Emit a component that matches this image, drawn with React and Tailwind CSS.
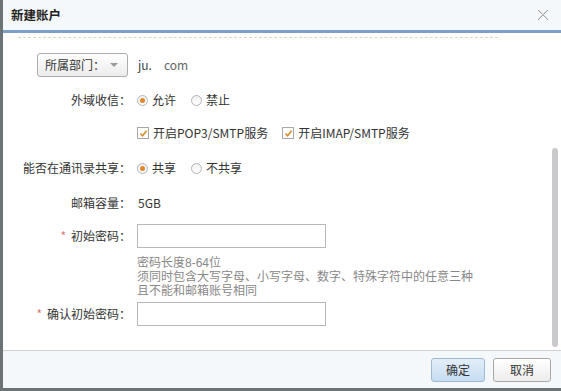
const font = { fontFamily: '"Noto Sans CJK SC", "Noto Sans", sans-serif' }

function Radio({ checked, label }) {
  return (
    <label className="flex items-center gap-[4px] mr-[15px]">
      <span className="w-[11px] h-[11px] rounded-full border border-[#b4b4b4] bg-gradient-to-b from-[#f0f0f0] to-white flex items-center justify-center">
        {checked && <span className="w-[5px] h-[5px] rounded-full bg-[#e2872c]" />}
      </span>
      <span>{label}</span>
    </label>
  )
}

function Check({ label }) {
  return (
    <label className="flex items-center gap-[4px] mr-[14px]">
      <span className="w-[12px] h-[12px] border border-[#a7a7a7] bg-white flex items-center justify-center">
        <svg width="9" height="9" viewBox="0 0 9 9">
          <path d="M1.5 4.5 L3.6 6.8 L7.6 1.8" fill="none" stroke="#d98a2a" strokeWidth="1.6" />
        </svg>
      </span>
      <span>{label}</span>
    </label>
  )
}

function Row({ label, star, className = '', children }) {
  return (
    <div className={`flex items-center ${className}`}>
      <div className="w-[128px] text-right shrink-0">
        {star && <span className="text-[#d77a7a] mr-[5px]">*</span>}
        {label}
      </div>
      <div className="ml-[6px] flex items-center">{children}</div>
    </div>
  )
}

export default function App() {
  return (
    <div className="w-[561px] h-[391px] flex flex-col bg-white border-l-[3px] border-b-[3px] border-[#6b7376] text-[12px] text-[#333] overflow-hidden" style={font}>
      {/* title */}
      <div className="h-[30px] shrink-0 bg-[#f5f8fa] flex items-center justify-between pl-[8px] pr-[12px]">
        <span className="font-bold text-[12.5px] text-[#222]">新建账户</span>
        <svg width="12" height="12" viewBox="0 0 12 12">
          <path d="M1 1 L11 11 M11 1 L1 11" stroke="#a8a8a8" strokeWidth="1" fill="none" />
          <path d="M2 1 L11 10 M10 1 L1 10" stroke="#d0d0d0" strokeWidth="0.8" fill="none" />
        </svg>
      </div>
      <div className="h-[3px] shrink-0 bg-[#7c9fc8]" />

      {/* body */}
      <div className="flex-1 flex min-h-0">
        <div className="flex-1 flex flex-col">
          <div className="mt-[4px] ml-[15px] w-[480px] border-t border-dashed border-[#d6d6d6]" />

          <div className="mt-[15px] h-[24px] flex items-center">
            <div className="ml-[34px] w-[91px] h-[24px] border border-[#acacac] rounded-[3px] bg-gradient-to-b from-white to-[#ececec] flex items-center pl-[7px]">
              <span>所属部门：</span>
              <span className="ml-[5px] w-0 h-0 border-l-[4px] border-r-[4px] border-t-[4px] border-l-transparent border-r-transparent border-t-[#9a9a9a]" />
            </div>
            <span className="ml-[10px] text-[#444]">ju.</span>
            <span className="ml-[12px] text-[#666]">com</span>
          </div>

          <Row label="外域收信：" className="mt-[11px] h-[24px]">
            <Radio checked label="允许" />
            <Radio label="禁止" />
          </Row>

          <Row label="" className="mt-[9px] h-[24px]">
            <Check label="开启POP3/SMTP服务" />
            <Check label="开启IMAP/SMTP服务" />
          </Row>

          <Row label="能否在通讯录共享：" className="mt-[11px] h-[24px]">
            <Radio checked label="共享" />
            <Radio label="不共享" />
          </Row>

          <Row label="邮箱容量：" className="mt-[11px] h-[24px]">
            <span className="ml-[1px]">5GB</span>
          </Row>

          <Row label="初始密码：" star className="mt-[9px] h-[24px]">
            <div className="w-[189px] h-[24px] border border-[#b8b8b8] bg-white" />
          </Row>

          <div className="ml-[134px] mt-[8px] leading-[14px] text-[#888] font-['Liberation_Sans','Noto_Sans_CJK_SC',sans-serif]">
            <div>密码长度8-64位</div>
            <div>须同时包含大写字母、小写字母、数字、特殊字符中的任意三种</div>
            <div>且不能和邮箱账号相同</div>
          </div>

          <Row label="确认初始密码：" star className="mt-[4px] h-[24px]">
            <div className="w-[189px] h-[24px] border border-[#b8b8b8] bg-white" />
          </Row>
        </div>

        {/* scrollbar */}
        <div className="w-[8px] mr-[1px] flex flex-col">
          <div className="mt-[115px] mb-[3px] flex-1 w-[6px] rounded-[3px] bg-[#c9c9cb]" />
        </div>
      </div>

      {/* footer */}
      <div className="h-[38px] shrink-0 border-t border-[#cdd0d2] bg-[#f5f8fa] flex items-center justify-end gap-[8px] pr-[10px]">
        <button className="w-[54px] h-[24px] rounded-[3px] border border-[#9fb9d3] bg-gradient-to-b from-[#e3eef9] to-[#c6dcf1] text-[#333]">确定</button>
        <button className="w-[58px] h-[24px] rounded-[3px] border border-[#a8a8a8] bg-gradient-to-b from-white to-[#ececec] text-[#333]">取消</button>
      </div>
    </div>
  )
}
